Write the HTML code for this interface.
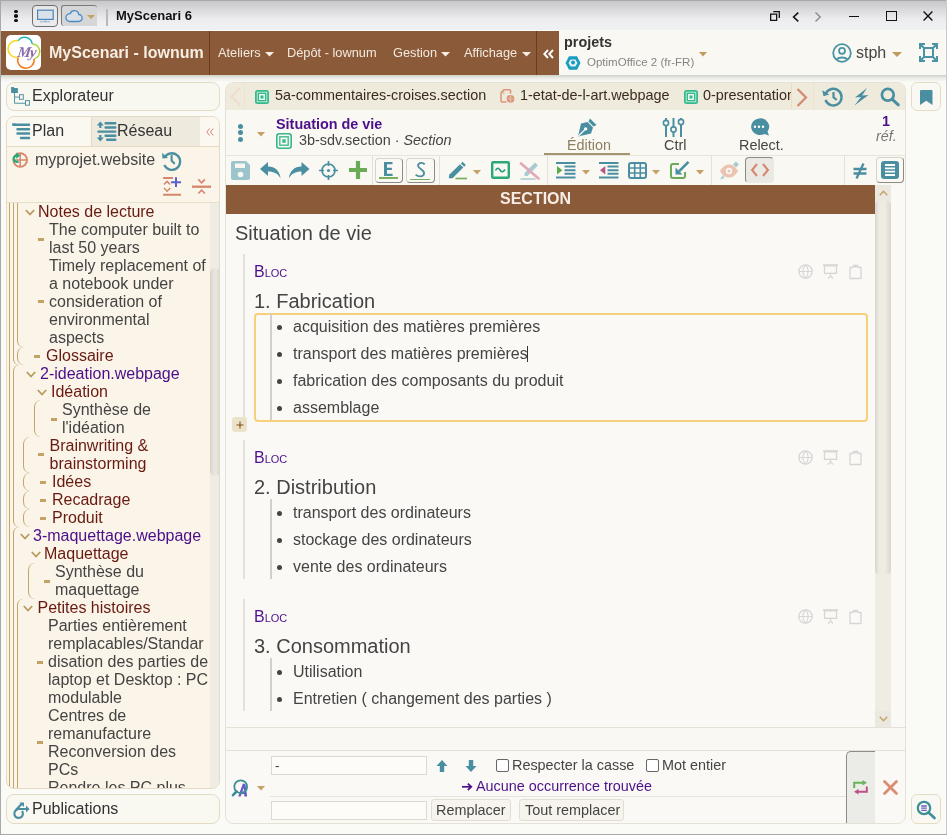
<!DOCTYPE html>
<html><head><meta charset="utf-8">
<style>
*{box-sizing:border-box;margin:0;padding:0}
html,body{width:947px;height:835px;overflow:hidden}
body{will-change:transform}
body{position:relative;background:#fafaf7;font-family:"Liberation Sans",sans-serif;color:#444;font-size:16px}
.a{position:absolute}
.t{position:absolute;white-space:nowrap;line-height:18px}
svg{position:absolute;overflow:visible}
</style></head><body>

<!-- window frame -->
<div class="a" style="left:0;top:0;width:947px;height:31px;background:linear-gradient(#c6c6c8 0,#dcdcde 35%,#ebebed 60%,#eff0f2 80%,#eff0f2 100%)"></div>
<div class="a" style="left:0;top:0;width:947px;height:1px;background:#a9a9a9"></div>
<div class="a" style="left:0;top:30px;width:947px;height:1px;background:#fbfbfb"></div>

<!-- brown header -->
<div class="a" style="left:1px;top:31px;width:558px;height:44px;background:#8a5a39"></div>
<div class="a" style="left:559px;top:31px;width:388px;height:44px;background:#faf8f2"></div>
<div class="a" style="left:1px;top:75px;width:945px;height:7px;background:linear-gradient(rgba(60,60,50,.22),rgba(60,60,50,.08) 45%,rgba(0,0,0,0))"></div>


<!-- title bar contents -->
<div class="a" style="left:14.2px;top:9.6px;width:3.6px;height:3.6px;border-radius:50%;background:#111"></div>
<div class="a" style="left:14.2px;top:14.05px;width:3.6px;height:3.6px;border-radius:50%;background:#111"></div>
<div class="a" style="left:14.2px;top:18.5px;width:3.6px;height:3.6px;border-radius:50%;background:#111"></div>
<div class="a" style="left:32px;top:5px;width:26px;height:22px;border:1px solid #6f6f6f;border-radius:4px;background:linear-gradient(#e6e6e7,#ececed)"></div>
<svg style="left:37px;top:9px" width="17" height="14" viewBox="0 0 17 14"><rect x="0.6" y="1.2" width="15.6" height="9.2" fill="#dae1ea" stroke="#4a86bb" stroke-width="1.2"/><path d="M3 12.7h10M8.4 10.5v2" stroke="#4a86bb" stroke-width="1.1" fill="none" opacity=".55"/></svg>
<div class="a" style="left:61px;top:5px;width:36px;height:21px;border-top:1px solid #7a7a7a;border-left:1px solid #7a7a7a;border-radius:3px 3px 0 3px;background:#d6d6d7"></div>
<svg style="left:65px;top:9px" width="18" height="14" viewBox="0 0 18 14"><path d="M4.5 12.5h9a3.5 3.5 0 0 0 .3-7 4.5 4.5 0 0 0-8.7-.8A3.8 3.8 0 0 0 4.5 12.5z" fill="#d9e0ea" stroke="#4a8ac2" stroke-width="1.3"/></svg>
<svg style="left:87px;top:15px" width="8" height="4" viewBox="0 0 8 4"><path d="M0 0h8L4 4z" fill="#c4a263"/></svg>
<div class="a" style="left:106px;top:9px;width:2px;height:17px;background:#b9b9b9"></div>
<div class="t" style="left:116px;top:7px;font-size:13px;font-weight:bold;color:#111">MyScenari 6</div>
<svg style="left:770px;top:11px" width="10" height="10" viewBox="0 0 10 10"><path d="M3.3 0.65h6v6.3M0.65 3.1h6v6.25h-6z" fill="none" stroke="#111" stroke-width="1.3"/></svg>
<svg style="left:792px;top:11.5px" width="8" height="10" viewBox="0 0 8 10"><path d="M6.3 0.6L1.6 5l4.7 4.4" fill="none" stroke="#111" stroke-width="1.6"/></svg>
<svg style="left:814px;top:11.5px" width="8" height="10" viewBox="0 0 8 10"><path d="M1.5 0.6L6.2 5L1.5 9.4" fill="none" stroke="#8a8a8a" stroke-width="1.4"/></svg>
<div class="a" style="left:849px;top:15.5px;width:10px;height:1.5px;background:#111"></div>
<div class="a" style="left:886px;top:11px;width:10.5px;height:10px;border:1.4px solid #111"></div>
<svg style="left:923px;top:11px" width="10" height="10" viewBox="0 0 10 10"><path d="M0.6 0.6l8.8 8.8M9.4 0.6l-8.8 8.8" stroke="#111" stroke-width="1.4"/></svg>

<!-- header contents -->
<div class="a" style="left:6px;top:35px;width:35px;height:35px;border-radius:5px;background:#fff"></div>
<svg style="left:6px;top:35px" width="35" height="35" viewBox="0 0 35 35">
<path d="M12.2 5.8 A7.69 7.69 0 0 1 26.3 9" fill="none" stroke="#1fb5b3" stroke-width="1.5"/>
<path d="M26.3 9 A7.62 7.62 0 0 1 28.1 24" fill="none" stroke="#a8d43c" stroke-width="1.5"/>
<path d="M28.1 24 A8.24 8.24 0 1 1 12.2 22.2" fill="none" stroke="#f67b20" stroke-width="1.5"/>
<path d="M12.2 22.2 A8.38 8.38 0 1 1 12.2 5.8" fill="none" stroke="#f8d51c" stroke-width="1.5"/>
<text x="20.5" y="22.5" text-anchor="middle" font-family="Liberation Serif" font-style="italic" font-weight="bold" font-size="15" fill="#8c69a8" letter-spacing="-1.2" transform="skewX(-8) translate(2.5 0)">My</text>
</svg>
<div class="t" style="left:49px;top:44px;font-size:16px;font-weight:bold;color:#f6ede3">MyScenari - lownum</div>
<div class="a" style="left:209px;top:31px;width:1px;height:44px;background:#6d3c1e"></div>
<div class="t" style="left:218px;top:44px;font-size:12.8px;color:#f3e9de">Ateliers</div>
<svg style="left:265px;top:52px" width="9" height="5" viewBox="0 0 9 5"><path d="M0 0h9L4.5 4.5z" fill="#f6eee6"/></svg>
<div class="t" style="left:287px;top:44px;font-size:12.8px;color:#f3e9de">Dépôt - lownum</div>
<div class="t" style="left:393px;top:44px;font-size:12.8px;color:#f3e9de">Gestion</div>
<svg style="left:441px;top:52px" width="9" height="5" viewBox="0 0 9 5"><path d="M0 0h9L4.5 4.5z" fill="#f6eee6"/></svg>
<div class="t" style="left:464px;top:44px;font-size:12.8px;color:#f3e9de">Affichage</div>
<svg style="left:522px;top:52px" width="9" height="5" viewBox="0 0 9 5"><path d="M0 0h9L4.5 4.5z" fill="#f6eee6"/></svg>
<div class="a" style="left:536px;top:31px;width:1px;height:44px;background:#6d3c1e"></div>
<svg style="left:543px;top:49px" width="11" height="10" viewBox="0 0 11 10"><path d="M5 1L1.3 5L5 9M10 1L6.3 5L10 9" fill="none" stroke="#fff" stroke-width="1.9"/></svg>

<div class="t" style="left:564px;top:33px;font-size:14.4px;font-weight:bold;color:#333">projets</div>
<svg style="left:565px;top:56px" width="16" height="14" viewBox="0 0 16 14"><path d="M4 0.3h8L15.5 7L12 13.7H4L0.5 7z" fill="#1a9cc0"/><path d="M5.6 3.6h4.8L12.5 7l-2.1 3.4H5.6L3.5 7z" fill="#e6f4f8"/><circle cx="8" cy="6.6" r="2" fill="#1a9cc0"/></svg>
<div class="t" style="left:587px;top:53px;font-size:11.52px;color:#858585">OptimOffice 2 (fr-FR)</div>
<svg style="left:699px;top:52px" width="8" height="5" viewBox="0 0 8 5"><path d="M0 0h8L4 4.5z" fill="#c09a5e"/></svg>
<svg style="left:832px;top:43px" width="20" height="20" viewBox="0 0 20 20"><circle cx="10" cy="10" r="8.8" fill="none" stroke="#4a94a6" stroke-width="1.8"/><circle cx="10" cy="7.8" r="3" fill="none" stroke="#4a94a6" stroke-width="1.8"/><path d="M4.5 16.2a7 4.5 0 0 1 11 0" fill="none" stroke="#4a94a6" stroke-width="1.8"/></svg>
<div class="t" style="left:856px;top:44px;font-size:16px;color:#444">stph</div>
<svg style="left:892px;top:52px" width="10" height="5" viewBox="0 0 10 5"><path d="M0 0h10L5 5z" fill="#c09a5e"/></svg>
<svg style="left:919px;top:43px" width="19" height="19" viewBox="0 0 19 19"><path d="M5 5h9v9H5z M1 6V1h5M1 1l4 4M13 1h5v5M18 1l-4 4M1 13v5h5M1 18l4-4M18 13v5h-5M18 18l-4-4" fill="none" stroke="#4a94a6" stroke-width="2"/></svg>



<!-- MAIN PANEL -->
<div class="a" style="left:225px;top:82px;width:681px;height:742px;border:1px solid #e5e1d6;border-radius:8px;background:#faf9f5;overflow:hidden">
  <div class="a" style="left:0;top:0;width:679px;height:27px;background:#eeeadc"></div>
  <div class="a" style="left:0;top:27px;width:679px;height:46px;background:#faf8f2"></div>
  <div class="a" style="left:0;top:72px;width:679px;height:1px;background:#e9e5da"></div>
  <div class="a" style="left:0;top:73px;width:679px;height:30px;background:#faf8f2"></div>
  <div class="a" style="left:0;top:644px;width:679px;height:1px;background:#e5e1d6"></div>
  <div class="a" style="left:0;top:645px;width:679px;height:23px;background:#f9f8f3"></div>
  <div class="a" style="left:0;top:667px;width:679px;height:1px;background:#e5e1d6"></div>
</div>
<div class="a" style="left:226px;top:185px;width:649px;height:29px;background:#8a5a39"></div>
<div class="t" style="left:500px;top:190px;font-size:16px;font-weight:bold;color:#f6eee6">SECTION</div>

<!-- right sidebar -->
<div class="a" style="left:911px;top:82px;width:30px;height:29px;border:1px solid #e5dcc3;border-radius:6px;background:#faf8f2"></div>
<svg style="left:920px;top:90px" width="13" height="15" viewBox="0 0 13 15"><path d="M0 1a1 1 0 0 1 1-1h10.5a1 1 0 0 1 1 1v14L6.25 10.8 0 15z" fill="#4a8fa1"/></svg>
<div class="a" style="left:911px;top:794px;width:30px;height:30px;border:1px solid #e5dcc3;border-radius:6px;background:#faf8f2"></div>


<!-- TABS BAR -->
<svg style="left:230px;top:87px" width="11" height="19" viewBox="0 0 11 19"><path d="M10 1L1.5 9.5L10 18" fill="none" stroke="#eedccb" stroke-width="1.8"/></svg>
<div class="a" style="left:244px;top:83px;width:1px;height:26px;background:#f1e3c9"></div>
<svg style="left:255px;top:89.5px" width="14" height="14" viewBox="0 0 14 14"><rect x="0" y="0" width="14" height="14" rx="2.5" fill="#36b98a"/><rect x="2.2" y="2.2" width="9.6" height="9.6" fill="none" stroke="#c8eedd" stroke-width="0.9"/><rect x="4" y="4" width="6" height="6" fill="#e8f8f0"/><rect x="5.5" y="5.5" width="3" height="3" fill="#36b98a"/></svg>
<div class="t" style="left:275px;top:86px;font-size:14.4px;color:#3b2b1d">5a-commentaires-croises.section</div>
<svg style="left:500px;top:89px" width="15" height="14" viewBox="0 0 15 14"><path d="M1 3.5v8.5a1 1 0 0 0 1 1h4.5M1 3.5L4 0.8h5.5a1 1 0 0 1 1 1v3" fill="none" stroke="#dc9479" stroke-width="1.5"/><path d="M2.3 2.5h2v2h-2z" fill="#dc9479" opacity=".7"/><circle cx="10.5" cy="9.8" r="3.9" fill="#dc9479"/><path d="M10.5 6.2v7.2M7.2 9.8h6.6" stroke="#e9c2b2" stroke-width="0.8"/><path d="M9.7 7.6h1.6v1.4H9.7zM9.7 10.6h1.6v1.4H9.7z" fill="#e8bfae"/></svg>
<div class="t" style="left:520px;top:86px;font-size:14.4px;color:#3b2b1d">1-etat-de-l-art.webpage</div>
<svg style="left:684px;top:89.5px" width="14" height="14" viewBox="0 0 14 14"><rect x="0" y="0" width="14" height="14" rx="2.5" fill="#36b98a"/><rect x="2.2" y="2.2" width="9.6" height="9.6" fill="none" stroke="#c8eedd" stroke-width="0.9"/><rect x="4" y="4" width="6" height="6" fill="#e8f8f0"/><rect x="5.5" y="5.5" width="3" height="3" fill="#36b98a"/></svg>
<div class="a" style="left:703px;top:82px;width:88px;height:28px;overflow:hidden"><div class="t" style="left:0;top:4px;font-size:14.4px;color:#3b2b1d">0-presentation</div></div>
<div class="a" style="left:791px;top:83px;width:1px;height:26px;background:#f1dcb6"></div>
<svg style="left:796px;top:88px" width="12" height="19" viewBox="0 0 12 19"><path d="M1.5 1L10 9.5L1.5 18" fill="none" stroke="#d48a6e" stroke-width="2.2"/></svg>
<div class="a" style="left:813px;top:83px;width:1px;height:26px;background:#f1e3c9"></div>
<svg style="left:822px;top:87px" width="21" height="20" viewBox="0 0 21 20"><path d="M3.8 6.5A8.3 8.3 0 1 1 3.5 13" fill="none" stroke="#4a8fa1" stroke-width="2.4"/><path d="M0.3 3.2l1.2 6 5.8-1.8z" fill="#4a8fa1"/><path d="M11.5 5v5.3l3.2 2.7" fill="none" stroke="#4a8fa1" stroke-width="2.2"/></svg>
<svg style="left:854px;top:88px" width="15" height="18" viewBox="0 0 15 18"><path d="M13 0L1 9.5L7 9L0.5 17.5L14.5 7L8.2 7.5z" fill="#4a8fa1"/></svg>
<svg style="left:880px;top:87px" width="21" height="20" viewBox="0 0 21 20"><circle cx="7.8" cy="7.8" r="5.9" fill="none" stroke="#4a8fa1" stroke-width="2.7"/><path d="M12.3 12.3L18.3 17.8" stroke="#4a8fa1" stroke-width="3" stroke-linecap="round"/></svg>

<!-- EDITOR HEADER -->
<div class="a" style="left:238px;top:123.5px;width:5px;height:5px;border-radius:3px;background:#4a8fa1"></div>
<div class="a" style="left:238px;top:130px;width:5px;height:5px;border-radius:3px;background:#4a8fa1"></div>
<div class="a" style="left:238px;top:136.5px;width:5px;height:5px;border-radius:3px;background:#4a8fa1"></div>
<svg style="left:257px;top:132px" width="8" height="5" viewBox="0 0 8 5"><path d="M0 0h8L4 4.5z" fill="#c2a066"/></svg>
<div class="t" style="left:276px;top:115px;font-size:14.4px;font-weight:bold;color:#4c108c">Situation de vie</div>
<svg style="left:276px;top:133px" width="16" height="16" viewBox="0 0 16 16"><rect x="0.8" y="0.8" width="14.4" height="14.4" rx="2.5" fill="none" stroke="#36b98a" stroke-width="1.6"/><rect x="3.8" y="3.8" width="8.4" height="8.4" fill="none" stroke="#36b98a" stroke-width="1.3"/><rect x="6.3" y="6.3" width="3.4" height="3.4" fill="#36b98a"/></svg>
<div class="t" style="left:299px;top:131px;font-size:14.4px;color:#444">3b-sdv.section · <i>Section</i></div>

<svg style="left:577px;top:118px" width="20" height="19" viewBox="0 0 20 19"><path d="M13 0.5l6.5 6.5-3 1.5-5-5z" fill="#4a8fa1"/><path d="M10.5 4l5.5 5.5-2 6L1 18.5 4 5.5z" fill="#4a8fa1"/><path d="M1.5 18L8 11.5" stroke="#faf8f2" stroke-width="1.3"/><circle cx="8.6" cy="10.9" r="1.7" fill="#faf8f2"/></svg>
<div class="t" style="left:567px;top:136px;font-size:14.4px;color:#8d7e5f">Édition</div>
<div class="a" style="left:544px;top:152.5px;width:86px;height:2px;background:#a4956f"></div>
<svg style="left:663px;top:118px" width="21" height="19" viewBox="0 0 21 19"><path d="M3 0v19M10.5 0v19M18 0v19" stroke="#4a8fa1" stroke-width="2"/><circle cx="3" cy="5" r="2.6" fill="#faf8f2" stroke="#4a8fa1" stroke-width="1.6"/><circle cx="10.5" cy="11.5" r="2.6" fill="#faf8f2" stroke="#4a8fa1" stroke-width="1.6"/><circle cx="18" cy="4" r="2.6" fill="#faf8f2" stroke="#4a8fa1" stroke-width="1.6"/></svg>
<div class="t" style="left:664px;top:136px;font-size:14.4px;color:#444">Ctrl</div>
<svg style="left:749px;top:118px" width="21" height="18" viewBox="0 0 21 18"><path d="M10 0.5a9 8.3 0 1 0 5.5 15.5l4.5 1.5-1.5-4A8.5 8.3 0 0 0 10 0.5z" fill="#4a8fa1"/><circle cx="6" cy="8.8" r="1.2" fill="#fff"/><circle cx="10" cy="8.8" r="1.2" fill="#fff"/><circle cx="14" cy="8.8" r="1.2" fill="#fff"/></svg>
<div class="t" style="left:739px;top:136px;font-size:14.4px;color:#444">Relect.</div>
<div class="t" style="left:882px;top:112px;font-size:14.4px;font-weight:bold;color:#4c108c">1</div>
<div class="t" style="left:876px;top:127px;font-size:14.4px;font-style:italic;color:#777">réf.</div>


<!-- TOOLBAR -->
<svg style="left:231px;top:161px" width="19" height="19" viewBox="0 0 19 19"><path d="M2 0h13l4 4v13a2 2 0 0 1-2 2H2a2 2 0 0 1-2-2V2a2 2 0 0 1 2-2z" fill="#9cc4cd"/><rect x="4" y="2.5" width="10" height="4.5" fill="#faf8f2"/><circle cx="9.5" cy="13.5" r="2.8" fill="#faf8f2"/></svg>
<svg style="left:260px;top:162px" width="21" height="17" viewBox="0 0 21 17"><path d="M8 0L0 7l8 7V9.5c6 0 10 2 12.5 7C20 9 15 4.5 8 4.5z" fill="#4a8fa1"/></svg>
<svg style="left:289px;top:162px" width="21" height="17" viewBox="0 0 21 17"><path d="M12.5 0l8 7-8 7V9.5c-6 0-10 2-12.5 7C0.5 9 5.5 4.5 12.5 4.5z" fill="#4a8fa1"/></svg>
<svg style="left:319px;top:161px" width="19" height="19" viewBox="0 0 19 19"><circle cx="9.5" cy="9.5" r="6.5" fill="none" stroke="#4a8fa1" stroke-width="1.7"/><path d="M9.5 0v5M9.5 14v5M0 9.5h5M14 9.5h5" stroke="#4a8fa1" stroke-width="1.7"/><circle cx="9.5" cy="9.5" r="1.6" fill="#4a8fa1"/></svg>
<svg style="left:349px;top:161px" width="18" height="18" viewBox="0 0 18 18"><path d="M9 0v18M0 9h18" stroke="#6aab58" stroke-width="4.2"/></svg>
<div class="a" style="left:372px;top:156px;width:1px;height:29px;background:#e4e1d9"></div>
<div class="a" style="left:374.5px;top:157.5px;width:28px;height:25px;border:1px solid #d6d3cb;border-right-color:#8e8a84;border-bottom-color:#8e8a84;border-radius:4px;background:#faf9f4"></div>
<svg style="left:384px;top:162px" width="9" height="14" viewBox="0 0 9 14"><path d="M0 0h8.5v2.3H3v3.5h4.9v2.3H3v3.6h5.6V14H0z" fill="#4a8fa1"/></svg>
<div class="a" style="left:379px;top:177.4px;width:19px;height:1.6px;background:#78b060"></div>
<div class="a" style="left:405.5px;top:157.5px;width:29px;height:25px;border:1px solid #d6d3cb;border-right-color:#8e8a84;border-bottom-color:#8e8a84;border-radius:4px;background:#faf9f4"></div>
<svg style="left:414px;top:162px" width="12" height="16" viewBox="0 0 12 16"><path d="M10.7 2.4C9.8 1.3 8.5 0.9 7.3 0.9 5.2 0.9 3.9 2.3 4.1 4 4.4 6.6 9.6 7.6 10 10.8 10.3 13 8.6 14.4 6.4 14.4 4.5 14.4 2.8 13.8 1.6 12.6" fill="none" stroke="#4a8fa1" stroke-width="1.9"/></svg>
<div class="a" style="left:410px;top:178.6px;width:20px;height:1.5px;background:#78b060"></div>
<div class="a" style="left:439px;top:156px;width:1px;height:29px;background:#e4e1d9"></div>
<svg style="left:447px;top:161px" width="21" height="19" viewBox="0 0 21 19"><path d="M15.5 0.8l3.3 3.3-1.6 1.6-3.3-3.3z" fill="#4a8fa1"/><path d="M13 3.3l3.3 3.3L5.5 17.3H1.8l0.4-3.6z" fill="#4a8fa1"/><path d="M8.5 17.5h11.5" stroke="#78b060" stroke-width="1.7"/></svg>
<svg style="left:473px;top:170px" width="8" height="5" viewBox="0 0 8 5"><path d="M0 0h8L4 4.5z" fill="#c2a066"/></svg>
<svg style="left:491px;top:161px" width="19" height="18" viewBox="0 0 19 18"><rect x="1.2" y="1.2" width="16.6" height="15.6" rx="1" fill="none" stroke="#2aa878" stroke-width="2.4"/><path d="M4.5 9.5c1.5-3 3-3 4.5-0.5s3 2.5 5-0.5" fill="none" stroke="#2a9a80" stroke-width="1.6"/></svg>
<svg style="left:520px;top:162px" width="20" height="18" viewBox="0 0 20 18"><path d="M15 0.5l3 3L7.5 14H4.5v-3z" fill="#a9cbd2"/><path d="M0.5 17h15" stroke="#a9cbd2" stroke-width="1.5"/><path d="M1 1.5L18.5 16.5" stroke="#e3a8b8" stroke-width="2.8" stroke-linecap="round"/></svg>
<div class="a" style="left:547px;top:156px;width:1px;height:29px;background:#e4e1d9"></div>
<svg style="left:556px;top:162px" width="20" height="17" viewBox="0 0 20 17"><path d="M0 1h19.5M8.5 4.6h11M8.5 8.2h11M8.5 11.8h11M0 15.4h19.5" stroke="#4a8fa1" stroke-width="2"/><path d="M1 4l5.3 4.2L1 12.4z" fill="#5aab4e"/></svg>
<svg style="left:582px;top:170px" width="8" height="5" viewBox="0 0 8 5"><path d="M0 0h8L4 4.5z" fill="#c2a066"/></svg>
<svg style="left:599px;top:162px" width="20" height="17" viewBox="0 0 20 17"><path d="M0 1h19.5M8.5 4.6h11M8.5 8.2h11M8.5 11.8h11M0 15.4h19.5" stroke="#4a8fa1" stroke-width="2"/><path d="M6.3 4L1 8.2l5.3 4.2z" fill="#c0508a"/></svg>
<svg style="left:628px;top:162px" width="19" height="17" viewBox="0 0 19 17"><rect x="1" y="1" width="17" height="15" rx="2" fill="none" stroke="#4a8fa1" stroke-width="2"/><path d="M1 6h17M1 11h17M6.7 1v15M12.3 1v15" stroke="#4a8fa1" stroke-width="1.6"/></svg>
<svg style="left:652px;top:170px" width="8" height="5" viewBox="0 0 8 5"><path d="M0 0h8L4 4.5z" fill="#c2a066"/></svg>
<svg style="left:670px;top:161px" width="20" height="18" viewBox="0 0 20 18"><path d="M9 3H3a2 2 0 0 0-2 2v10a2 2 0 0 0 2 2h10a2 2 0 0 0 2-2v-4" fill="none" stroke="#6aab58" stroke-width="2"/><path d="M18.5 0.8L9 10.3" stroke="#4a8fa1" stroke-width="2.6"/><path d="M5.5 6.5v7h7z" fill="#4a8fa1"/></svg>
<svg style="left:696px;top:170px" width="8" height="5" viewBox="0 0 8 5"><path d="M0 0h8L4 4.5z" fill="#c2a066"/></svg>
<div class="a" style="left:711px;top:156px;width:1px;height:29px;background:#e4e1d9"></div>
<svg style="left:719px;top:161px" width="21" height="19" viewBox="0 0 21 19"><path d="M1 10c3-5 6-6.5 9-6.5s6 1.5 9 6.5c-3 5-6 6.5-9 6.5S4 15 1 10z" fill="#ebc3b3"/><circle cx="10" cy="10" r="3.2" fill="#faf8f2"/><circle cx="10" cy="10" r="1.5" fill="#ebc3b3"/><path d="M17 0.5l3 3-3 3-3-3z" fill="#a9cbd2"/><path d="M4 14l-3 4.5 4.5-1.5z" fill="#a9cbd2"/></svg>
<div class="a" style="left:745px;top:157px;width:29px;height:26px;border:1px solid #ebe9e3;border-top-color:#8a8a86;border-left-color:#8a8a86;border-radius:4px;background:#ebe9e3"></div>
<svg style="left:751px;top:163px" width="18" height="14" viewBox="0 0 18 14"><path d="M6 1L1 7l5 6M12 1l5 6-5 6" fill="none" stroke="#d4876c" stroke-width="2"/></svg>
<div class="a" style="left:844px;top:156px;width:1px;height:29px;background:#e4e1d9"></div>
<svg style="left:853px;top:163px" width="14" height="16" viewBox="0 0 14 16"><path d="M0.5 6h13M0.5 10.5h13" stroke="#4a8fa1" stroke-width="2.3"/><path d="M10.5 0.5L3.5 15.5" stroke="#4a8fa1" stroke-width="2.3"/></svg>
<div class="a" style="left:876px;top:157px;width:28px;height:26px;border:1px solid #d6d3cb;border-right-color:#8e8a84;border-bottom-color:#8e8a84;border-radius:4px;background:#faf9f4"></div>
<svg style="left:881px;top:161px" width="18" height="18" viewBox="0 0 18 18"><rect x="0" y="0" width="18" height="18" rx="3" fill="#4a8fa1"/><path d="M4 4h10M4 7.3h10M4 10.6h10M4 14h10" stroke="#fff" stroke-width="1.8"/></svg>

<!-- CONTENT -->
<div class="t" style="left:235px;top:223.7px;font-size:20px;color:#444;">Situation de vie</div>
<div class="a" style="left:243px;top:254px;width:2px;height:167.7px;background:#e3e0d9"></div>
<div class="t" style="left:254px;top:263.2px;font-size:16px;color:#4c108c;font-variant:small-caps">Bloc</div>
<div class="t" style="left:254px;top:291.8px;font-size:20px;color:#444;">1. Fabrication</div>
<div class="a" style="left:254px;top:312.5px;width:614px;height:109.5px;border:2px solid #f6d07a;border-radius:4px"></div>
<div class="a" style="left:270px;top:312.8px;width:2px;height:107.5px;background:#d3d0ca"></div>
<div class="a" style="left:277px;top:325.1px;width:5px;height:5px;border-radius:50%;background:#444"></div>
<div class="t" style="left:293px;top:318.2px;font-size:16px;color:#444;">acquisition des matières premières</div>
<div class="a" style="left:277px;top:352.1px;width:5px;height:5px;border-radius:50%;background:#444"></div>
<div class="t" style="left:293px;top:345.2px;font-size:16px;color:#444;">transport des matières premières</div>
<div class="a" style="left:277px;top:379.1px;width:5px;height:5px;border-radius:50%;background:#444"></div>
<div class="t" style="left:293px;top:372.2px;font-size:16px;color:#444;">fabrication des composants du produit</div>
<div class="a" style="left:277px;top:406.1px;width:5px;height:5px;border-radius:50%;background:#444"></div>
<div class="t" style="left:293px;top:399.2px;font-size:16px;color:#444;">assemblage</div>
<svg style="left:798px;top:264px" width="15" height="15" viewBox="0 0 15 15"><circle cx="7.5" cy="7.5" r="6.6" fill="none" stroke="#d6d6d6" stroke-width="1.3"/><path d="M0.9 7.5h13.2M7.5 0.9c-3.5 4-3.5 9.2 0 13.2M7.5 0.9c3.5 4 3.5 9.2 0 13.2" fill="none" stroke="#d6d6d6" stroke-width="1.2"/></svg>
<svg style="left:823px;top:264px" width="15" height="15" viewBox="0 0 15 15"><path d="M0 1h15" stroke="#d6d6d6" stroke-width="1.6"/><rect x="1.5" y="1.8" width="12" height="7.5" fill="none" stroke="#d6d6d6" stroke-width="1.3"/><path d="M7.5 9.5v3M5 14.5l2.5-2.5 2.5 2.5" fill="none" stroke="#d6d6d6" stroke-width="1.2"/></svg>
<svg style="left:849px;top:264px" width="13" height="15" viewBox="0 0 13 15"><path d="M1 3.5h2.5l1-2h4l1 2H12v10.8l-1 .2H1z" fill="none" stroke="#d6d6d6" stroke-width="1.3"/><path d="M4.5 1.5h4v2h-4z" fill="#d6d6d6"/></svg>
<div class="a" style="left:243px;top:440px;width:2px;height:139.3px;background:#e3e0d9"></div>
<div class="t" style="left:254px;top:449.2px;font-size:16px;color:#4c108c;font-variant:small-caps">Bloc</div>
<div class="t" style="left:254px;top:477.8px;font-size:20px;color:#444;">2. Distribution</div>
<div class="a" style="left:270px;top:498.8px;width:2px;height:80.5px;background:#d3d0ca"></div>
<div class="a" style="left:277px;top:511.1px;width:5px;height:5px;border-radius:50%;background:#444"></div>
<div class="t" style="left:293px;top:504.2px;font-size:16px;color:#444;">transport des ordinateurs</div>
<div class="a" style="left:277px;top:538.1px;width:5px;height:5px;border-radius:50%;background:#444"></div>
<div class="t" style="left:293px;top:531.2px;font-size:16px;color:#444;">stockage des ordinateurs</div>
<div class="a" style="left:277px;top:565.1px;width:5px;height:5px;border-radius:50%;background:#444"></div>
<div class="t" style="left:293px;top:558.2px;font-size:16px;color:#444;">vente des ordinateurs</div>
<svg style="left:798px;top:450px" width="15" height="15" viewBox="0 0 15 15"><circle cx="7.5" cy="7.5" r="6.6" fill="none" stroke="#d6d6d6" stroke-width="1.3"/><path d="M0.9 7.5h13.2M7.5 0.9c-3.5 4-3.5 9.2 0 13.2M7.5 0.9c3.5 4 3.5 9.2 0 13.2" fill="none" stroke="#d6d6d6" stroke-width="1.2"/></svg>
<svg style="left:823px;top:450px" width="15" height="15" viewBox="0 0 15 15"><path d="M0 1h15" stroke="#d6d6d6" stroke-width="1.6"/><rect x="1.5" y="1.8" width="12" height="7.5" fill="none" stroke="#d6d6d6" stroke-width="1.3"/><path d="M7.5 9.5v3M5 14.5l2.5-2.5 2.5 2.5" fill="none" stroke="#d6d6d6" stroke-width="1.2"/></svg>
<svg style="left:849px;top:450px" width="13" height="15" viewBox="0 0 13 15"><path d="M1 3.5h2.5l1-2h4l1 2H12v10.8l-1 .2H1z" fill="none" stroke="#d6d6d6" stroke-width="1.3"/><path d="M4.5 1.5h4v2h-4z" fill="#d6d6d6"/></svg>
<div class="a" style="left:243px;top:599px;width:2px;height:112.3px;background:#e3e0d9"></div>
<div class="t" style="left:254px;top:608.2px;font-size:16px;color:#4c108c;font-variant:small-caps">Bloc</div>
<div class="t" style="left:254px;top:636.8px;font-size:20px;color:#444;">3. Consommation</div>
<div class="a" style="left:270px;top:657.8px;width:2px;height:53.5px;background:#d3d0ca"></div>
<div class="a" style="left:277px;top:670.1px;width:5px;height:5px;border-radius:50%;background:#444"></div>
<div class="t" style="left:293px;top:663.2px;font-size:16px;color:#444;">Utilisation</div>
<div class="a" style="left:277px;top:697.1px;width:5px;height:5px;border-radius:50%;background:#444"></div>
<div class="t" style="left:293px;top:690.2px;font-size:16px;color:#444;">Entretien ( changement des parties )</div>
<svg style="left:798px;top:609px" width="15" height="15" viewBox="0 0 15 15"><circle cx="7.5" cy="7.5" r="6.6" fill="none" stroke="#d6d6d6" stroke-width="1.3"/><path d="M0.9 7.5h13.2M7.5 0.9c-3.5 4-3.5 9.2 0 13.2M7.5 0.9c3.5 4 3.5 9.2 0 13.2" fill="none" stroke="#d6d6d6" stroke-width="1.2"/></svg>
<svg style="left:823px;top:609px" width="15" height="15" viewBox="0 0 15 15"><path d="M0 1h15" stroke="#d6d6d6" stroke-width="1.6"/><rect x="1.5" y="1.8" width="12" height="7.5" fill="none" stroke="#d6d6d6" stroke-width="1.3"/><path d="M7.5 9.5v3M5 14.5l2.5-2.5 2.5 2.5" fill="none" stroke="#d6d6d6" stroke-width="1.2"/></svg>
<svg style="left:849px;top:609px" width="13" height="15" viewBox="0 0 13 15"><path d="M1 3.5h2.5l1-2h4l1 2H12v10.8l-1 .2H1z" fill="none" stroke="#d6d6d6" stroke-width="1.3"/><path d="M4.5 1.5h4v2h-4z" fill="#d6d6d6"/></svg>
<div class="a" style="left:527px;top:346px;width:1px;height:16px;background:#333"></div>
<div class="a" style="left:232px;top:417px;width:15px;height:15px;border-radius:3px;background:#ebe3c9"></div>
<svg style="left:236px;top:421px" width="8" height="8" viewBox="0 0 8 8"><path d="M4 0.5v7M0.5 4h7" stroke="#8a4a12" stroke-width="1.1"/></svg>
<div class="a" style="left:875px;top:185px;width:16px;height:542px;background:#efede3"></div>
<div class="a" style="left:875px;top:185px;width:16px;height:16px;background:#ebe8df"></div>
<svg style="left:879px;top:190px" width="9" height="6" viewBox="0 0 9 6"><path d="M0.8 5.2L4.5 1.2l3.7 4" fill="none" stroke="#c2a066" stroke-width="1.3"/></svg>
<div class="a" style="left:875px;top:201px;width:16px;height:373px;border-radius:4px;background:linear-gradient(90deg,#d6d4cc,#edebe2 25%,#efede3 60%,#d9d7cf)"></div>
<div class="a" style="left:875px;top:711px;width:16px;height:16px;background:#ebe8df"></div>
<svg style="left:879px;top:716px" width="9" height="6" viewBox="0 0 9 6"><path d="M0.8 0.8L4.5 4.8l3.7-4" fill="none" stroke="#c2a066" stroke-width="1.3"/></svg>

<!-- FIND PANEL -->
<svg style="left:232px;top:779px" width="18" height="19" viewBox="0 0 18 19"><path d="M8.5 15.5l0 0M6.2 17.5L10.8 4.8h2.6l1.8 12.7h-2.8l-.3-2.4H9.6l-.9 2.4z M10.4 12.8h1.8l-.4-4z" fill="#6a5ac8" fill-rule="evenodd"/><circle cx="8.7" cy="7.7" r="6.4" fill="none" stroke="#3c8e98" stroke-width="1.8"/><path d="M4.5 12.5L1 16.2" stroke="#3c8e98" stroke-width="2.6" stroke-linecap="round"/></svg>
<svg style="left:257px;top:785.5px" width="8" height="5" viewBox="0 0 8 5"><path d="M0 0h8L4 4.5z" fill="#c2a066"/></svg>
<div class="a" style="left:271px;top:756px;width:156px;height:19px;border:1px solid #dcd9d0;background:#fdfcf8"></div>
<div class="t" style="left:275px;top:757px;font-size:13.3px;color:#333">-</div>
<svg style="left:436px;top:760px" width="12" height="12" viewBox="0 0 12 12"><path d="M6 0L0.5 6h3.3v6h4.4V6h3.3z" fill="#4a8fa1"/></svg>
<svg style="left:465px;top:760px" width="12" height="12" viewBox="0 0 12 12"><path d="M6 12L0.5 6h3.3V0h4.4v6h3.3z" fill="#4a8fa1"/></svg>
<div class="a" style="left:496px;top:759px;width:13px;height:13px;border:1px solid #666;border-radius:2px;background:#fff"></div>
<div class="t" style="left:512px;top:756px;font-size:14.4px;color:#444">Respecter la casse</div>
<div class="a" style="left:646px;top:759px;width:13px;height:13px;border:1px solid #666;border-radius:2px;background:#fff"></div>
<div class="t" style="left:662px;top:756px;font-size:14.4px;color:#444">Mot entier</div>
<svg style="left:462px;top:782.5px" width="11" height="8" viewBox="0 0 11 8"><path d="M0 3.8h8.5" stroke="#4c108c" stroke-width="1.7"/><path d="M5.8 0.6L9.3 3.8 5.8 7" fill="none" stroke="#4c108c" stroke-width="1.7"/></svg>
<div class="t" style="left:476px;top:776.5px;font-size:14.4px;color:#4c108c">Aucune occurrence trouvée</div>
<div class="a" style="left:270px;top:796px;width:576px;height:1px;background:#e6e3db"></div>
<div class="a" style="left:271px;top:801px;width:156px;height:19px;border:1px solid #dcd9d0;background:#fdfcf8"></div>
<div class="a" style="left:431px;top:799px;width:80px;height:22px;border:1px solid #e1ded6;border-radius:3px;background:#f6f4ed"></div>
<div class="t" style="left:436px;top:800.5px;font-size:14.4px;color:#444">Remplacer</div>
<div class="a" style="left:519px;top:799px;width:105px;height:22px;border:1px solid #e1ded6;border-radius:3px;background:#f6f4ed"></div>
<div class="t" style="left:525px;top:800.5px;font-size:14.4px;color:#444">Tout remplacer</div>
<div class="a" style="left:846px;top:751px;width:29px;height:72px;border-top:1.5px solid #8c8c8c;border-left:1.5px solid #8c8c8c;border-radius:5px 0 0 0;background:#ebebe7"></div>
<svg style="left:853px;top:780px" width="15" height="15" viewBox="0 0 15 15"><path d="M1.2 8V2.8h9" fill="none" stroke="#6ab35a" stroke-width="2"/><path d="M9.5 0l4.5 2.8-4.5 2.8z" fill="#6ab35a"/><path d="M13.8 6.5v5.2h-9" fill="none" stroke="#c0508a" stroke-width="2"/><path d="M5.5 9l-4.5 2.7 4.5 2.8z" fill="#c0508a"/></svg>
<svg style="left:883px;top:780px" width="15" height="15" viewBox="0 0 15 15"><path d="M1.5 1.5l12 12M13.5 1.5l-12 12" stroke="#da8c72" stroke-width="2.8" stroke-linecap="round"/></svg>
<svg style="left:916px;top:800px" width="20" height="19" viewBox="0 0 20 19"><circle cx="8" cy="8" r="6.2" fill="none" stroke="#3c8e98" stroke-width="2.2"/><path d="M5.2 6h5.6M5.2 8.2h5.6M5.2 10.4h5.6" stroke="#6a5ac8" stroke-width="1.3"/><path d="M12.5 12.5L18.5 18" stroke="#3c8e98" stroke-width="2.6" stroke-linecap="round"/></svg>

<!-- LEFT PANEL -->
<div class="a" style="left:6px;top:82px;width:214px;height:29px;border:1px solid #e4dbc2;border-radius:8px;background:#f8f7f0"></div>
<svg style="left:8px;top:84px" width="28" height="26" viewBox="8 84 28 26"><path d="M11.1 87.6a0.5 0.5 0 0 1 .5-.5h2l.8.8h3a.5.5 0 0 1 .5.5v4a.6.6 0 0 1-.6.6h-5.6a.6.6 0 0 1-.6-.6z" fill="#4a8fa1"/><path d="M14.55 92.5v10.75h11M14.55 97.05h4.9" fill="none" stroke="#4a8fa1" stroke-width="0.95"/><rect x="19.5" y="94.7" width="3.8" height="4.6" fill="none" stroke="#4a8fa1" stroke-width="0.95"/><rect x="25.5" y="100.6" width="3.9" height="4.6" fill="none" stroke="#4a8fa1" stroke-width="0.95"/></svg>
<div class="t" style="left:32px;top:87px;font-size:16px;color:#333">Explorateur</div>

<div class="a" style="left:6px;top:116px;width:214px;height:673px;border:1px solid #e4dbc2;border-radius:8px;background:#fbf4e8;overflow:hidden">
  <div class="a" style="left:0;top:0;width:84px;height:29px;background:#faf8f1"></div>
  <div class="a" style="left:84px;top:0;width:109px;height:29px;background:#eeeadd;border-left:1px solid #e4dbc2"></div>
  <div class="a" style="left:193px;top:0;width:21px;height:29px;background:#faf8f1"></div>
  <div class="a" style="left:0;top:29px;width:214px;height:1px;background:#e4dbc2"></div>
  <div class="a" style="left:0;top:85px;width:214px;height:1px;background:#e8dfc9"></div>
  <div class="a" style="left:203px;top:86px;width:10px;height:587px;background:#efede3"></div>
  <div class="a" style="left:203px;top:151px;width:10px;height:208px;border-radius:5px;background:linear-gradient(90deg,#d3d1c9,#e6e4dc 35%,#e7e5dd 65%,#d6d4cc)"></div>
</div>
<svg style="left:12px;top:123px" width="18" height="17" viewBox="0 0 18 17"><path d="M1.3 1.65h15.7M5.5 6.2h11.5M5.5 10.4h11.5M9 15.1h8" stroke="#4a8fa1" stroke-width="2.5" stroke-linecap="round"/><path d="M0 0.4h4v2.5H1.5z" fill="#4a8fa1"/></svg>
<div class="t" style="left:32px;top:122px;font-size:16px;color:#333">Plan</div>
<svg style="left:97px;top:121px" width="20" height="21" viewBox="0 0 20 21"><path d="M8.6 2.3h9.7M8.6 6.5h9.7M1.5 10.6h16.8M8.6 14.8h9.7M10.2 18.8h8.1" stroke="#4a8fa1" stroke-width="2.4" stroke-linecap="round"/><path d="M3.3 0.5L-0.2 4.6h7z M3.3 20.5L-0.2 16.4h7z" fill="#4a8fa1"/><path d="M3.3 4v3M3.3 14v3" stroke="#4a8fa1" stroke-width="2.2"/></svg>
<div class="t" style="left:117px;top:122px;font-size:16px;color:#333">Réseau</div>
<svg style="left:206px;top:128px" width="8" height="8" viewBox="0 0 8 8"><path d="M3.5 0.5L0.8 4l2.7 3.5M7.2 0.5L4.5 4l2.7 3.5" fill="none" stroke="#d4876c" stroke-width="1"/></svg>

<svg style="left:12px;top:152px" width="17" height="17" viewBox="0 0 17 17"><circle cx="8.2" cy="8" r="6.8" fill="none" stroke="#d9876d" stroke-width="1.9"/><path d="M1.4 8h13.6M8.2 1.2v13.6" fill="none" stroke="#d9876d" stroke-width="1.5"/><path d="M6.5 9.5a3.3 3.3 0 0 1-4.8-2.3 3.3 3.3 0 0 1 3-3.6" fill="none" stroke="#1fad7a" stroke-width="2.2"/><path d="M4 0.6l4.3 2.9-4 3.2z" fill="#1fad7a"/></svg>
<div class="t" style="left:35px;top:151px;font-size:16px;color:#444">myprojet.website</div>
<svg style="left:155px;top:145px" width="65" height="55" viewBox="155 145 65 55">
<path d="M164.6 157.5A8.3 8.3 0 1 1 164.3 165" fill="none" stroke="#4a8fa1" stroke-width="2.3"/>
<path d="M162.2 152.8l0.2 5.8 5.6-0.6z" fill="#4a8fa1"/>
<path d="M171.6 155.5v5.2l2.6 2.6" fill="none" stroke="#4a8fa1" stroke-width="2.1" stroke-linecap="round"/>
<path d="M163.1 178h9.9M163.1 194.8h17.9" stroke="#d4876c" stroke-width="1.9"/>
<path d="M164 184.6l3.1-3.2 3.1 3.2M164 188l3.1 3.2 3.1-3.2" fill="none" stroke="#d4876c" stroke-width="1.5"/>
<path d="M176 177.3v9.6M171.1 182.2h9.9" stroke="#5a62c8" stroke-width="2"/>
<path d="M198.3 179.4l3.3 3.4 3.3-3.4M198.3 193.5l3.3-3.4 3.3 3.4" fill="none" stroke="#d4876c" stroke-width="1.6"/>
<path d="M192 186.7h19" stroke="#d4876c" stroke-width="2.3"/>
</svg>



<!-- TREE -->
<div class="a" style="left:7px;top:203px;width:203px;height:585px;overflow:hidden;border-bottom-left-radius:7px">
<div class="t" style="left:31px;top:0px;color:#681910">Notes de lecture</div>
<div class="t" style="left:42px;top:18px;color:#444">The computer built to</div>
<div class="t" style="left:42px;top:36px;color:#444">last 50 years</div>
<div class="t" style="left:42px;top:54px;color:#444">Timely replacement of</div>
<div class="t" style="left:42px;top:72px;color:#444">a notebook under</div>
<div class="t" style="left:42px;top:90px;color:#444">consideration of</div>
<div class="t" style="left:42px;top:108px;color:#444">environmental</div>
<div class="t" style="left:42px;top:126px;color:#444">aspects</div>
<div class="t" style="left:39px;top:144px;color:#681910">Glossaire</div>
<div class="t" style="left:33px;top:162px;color:#4a0e8a">2-ideation.webpage</div>
<div class="t" style="left:44px;top:180px;color:#681910">Idéation</div>
<div class="t" style="left:55px;top:198px;color:#444">Synthèse de</div>
<div class="t" style="left:55px;top:216px;color:#444">l'idéation</div>
<div class="t" style="left:42.5px;top:234px;color:#681910">Brainwriting &amp;</div>
<div class="t" style="left:42.5px;top:252px;color:#681910">brainstorming</div>
<div class="t" style="left:45px;top:270px;color:#681910">Idées</div>
<div class="t" style="left:45px;top:288px;color:#681910">Recadrage</div>
<div class="t" style="left:45px;top:306px;color:#681910">Produit</div>
<div class="t" style="left:26px;top:324px;color:#4a0e8a">3-maquettage.webpage</div>
<div class="t" style="left:37px;top:342px;color:#681910">Maquettage</div>
<div class="t" style="left:48px;top:360px;color:#444">Synthèse du</div>
<div class="t" style="left:48px;top:378px;color:#444">maquettage</div>
<div class="t" style="left:30.5px;top:396px;color:#681910">Petites histoires</div>
<div class="t" style="left:41px;top:414px;color:#444">Parties entièrement</div>
<div class="t" style="left:41px;top:432px;color:#444">remplacables/Standar</div>
<div class="t" style="left:41px;top:450px;color:#444">disation des parties de</div>
<div class="t" style="left:41px;top:468px;color:#444">laptop et Desktop : PC</div>
<div class="t" style="left:41px;top:486px;color:#444">modulable</div>
<div class="t" style="left:41px;top:504px;color:#444">Centres de</div>
<div class="t" style="left:41px;top:522px;color:#444">remanufacture</div>
<div class="t" style="left:41px;top:540px;color:#444">Reconversion des</div>
<div class="t" style="left:41px;top:558px;color:#444">PCs</div>
<div class="t" style="left:41px;top:576px;color:#444">Rendre les PC plus</div>
<svg style="left:18px;top:6px" width="10" height="7" viewBox="0 0 10 7"><path d="M0.8 1l4.2 4.5L9.2 1" fill="none" stroke="#b89a5e" stroke-width="1.8"/></svg>
<svg style="left:19px;top:168px" width="10" height="7" viewBox="0 0 10 7"><path d="M0.8 1l4.2 4.5L9.2 1" fill="none" stroke="#b89a5e" stroke-width="1.8"/></svg>
<svg style="left:30px;top:186px" width="10" height="7" viewBox="0 0 10 7"><path d="M0.8 1l4.2 4.5L9.2 1" fill="none" stroke="#b89a5e" stroke-width="1.8"/></svg>
<svg style="left:13px;top:330px" width="10" height="7" viewBox="0 0 10 7"><path d="M0.8 1l4.2 4.5L9.2 1" fill="none" stroke="#b89a5e" stroke-width="1.8"/></svg>
<svg style="left:24px;top:348px" width="10" height="7" viewBox="0 0 10 7"><path d="M0.8 1l4.2 4.5L9.2 1" fill="none" stroke="#b89a5e" stroke-width="1.8"/></svg>
<svg style="left:16px;top:402px" width="10" height="7" viewBox="0 0 10 7"><path d="M0.8 1l4.2 4.5L9.2 1" fill="none" stroke="#b89a5e" stroke-width="1.8"/></svg>
<div class="a" style="left:31px;top:34.5px;width:6px;height:3px;background:#c2a266"></div>
<div class="a" style="left:31px;top:96.5px;width:6px;height:3px;background:#c2a266"></div>
<div class="a" style="left:27px;top:151.5px;width:6px;height:3px;background:#c2a266"></div>
<div class="a" style="left:44px;top:214.5px;width:6px;height:3px;background:#c2a266"></div>
<div class="a" style="left:31px;top:250.0px;width:6px;height:3px;background:#c2a266"></div>
<div class="a" style="left:33px;top:277.5px;width:6px;height:3px;background:#c2a266"></div>
<div class="a" style="left:33px;top:295.5px;width:6px;height:3px;background:#c2a266"></div>
<div class="a" style="left:33px;top:313.5px;width:6px;height:3px;background:#c2a266"></div>
<div class="a" style="left:37px;top:376.5px;width:6px;height:3px;background:#c2a266"></div>
<div class="a" style="left:30px;top:457.5px;width:6px;height:3px;background:#c2a266"></div>
<div class="a" style="left:30px;top:537.5px;width:6px;height:3px;background:#c2a266"></div>
<div class="a" style="left:2px;top:-53px;width:8px;height:750px;border-left:1px solid #c4a46a;border-radius:0px 0 0 0px"></div>
<div class="a" style="left:6px;top:-53px;width:8px;height:214.5px;border-left:1px solid #c4a46a;border-radius:0px 0 0 6px"></div>
<div class="a" style="left:6px;top:161.5px;width:8px;height:162.0px;border-left:1px solid #c4a46a;border-radius:6px 0 0 6px"></div>
<div class="a" style="left:6px;top:323.5px;width:8px;height:373.5px;border-left:1px solid #c4a46a;border-radius:6px 0 0 0px"></div>
<div class="a" style="left:10px;top:-53px;width:8px;height:196.5px;border-left:1px solid #c4a46a;border-radius:0px 0 0 6px"></div>
<div class="a" style="left:10px;top:143.5px;width:8px;height:18.0px;border-left:1px solid #c4a46a;border-radius:7px 0 0 7px"></div>
<div class="a" style="left:27px;top:197px;width:8px;height:36.5px;border-left:1px solid #c4a46a;border-radius:7px 0 0 7px"></div>
<div class="a" style="left:16px;top:233.5px;width:8px;height:36.0px;border-left:1px solid #c4a46a;border-radius:7px 0 0 7px"></div>
<div class="a" style="left:16px;top:269.5px;width:8px;height:18.0px;border-left:1px solid #c4a46a;border-radius:7px 0 0 7px"></div>
<div class="a" style="left:16px;top:287.5px;width:8px;height:18.0px;border-left:1px solid #c4a46a;border-radius:7px 0 0 7px"></div>
<div class="a" style="left:16px;top:305.5px;width:8px;height:18.0px;border-left:1px solid #c4a46a;border-radius:7px 0 0 7px"></div>
<div class="a" style="left:21px;top:359.5px;width:8px;height:36.0px;border-left:1px solid #c4a46a;border-radius:7px 0 0 7px"></div>
<div class="a" style="left:10px;top:395.5px;width:8px;height:301.5px;border-left:1px solid #c4a46a;border-radius:6px 0 0 0px"></div>
</div>
<!-- /TREE -->
<div class="a" style="left:6px;top:794px;width:214px;height:30px;border:1px solid #e4dbc2;border-radius:8px;background:#f9f8f1"></div>
<svg style="left:11.5px;top:802px" width="18" height="18" viewBox="0 0 18 18"><path d="M5.5 7.5A4.3 4.3 0 1 0 10 9" fill="none" stroke="#4a8fa1" stroke-width="2.2"/><path d="M3.5 8.5L10 1.5M5 7h10" fill="none" stroke="#4a8fa1" stroke-width="2.2"/><path d="M7.5 0.5h4.5v4.5z M14 3.5L17.5 7L14 10.5z" fill="#4a8fa1"/></svg>
<div class="t" style="left:32px;top:800px;font-size:16px;color:#333">Publications</div>

<div class="a" style="left:0;top:0;width:1px;height:835px;background:#a9a9a9"></div>
<div class="a" style="left:946px;top:0;width:1px;height:835px;background:#c9c9c9"></div>
<div class="a" style="left:0;top:834px;width:947px;height:1px;background:#a9a9a9"></div>

</body></html>
